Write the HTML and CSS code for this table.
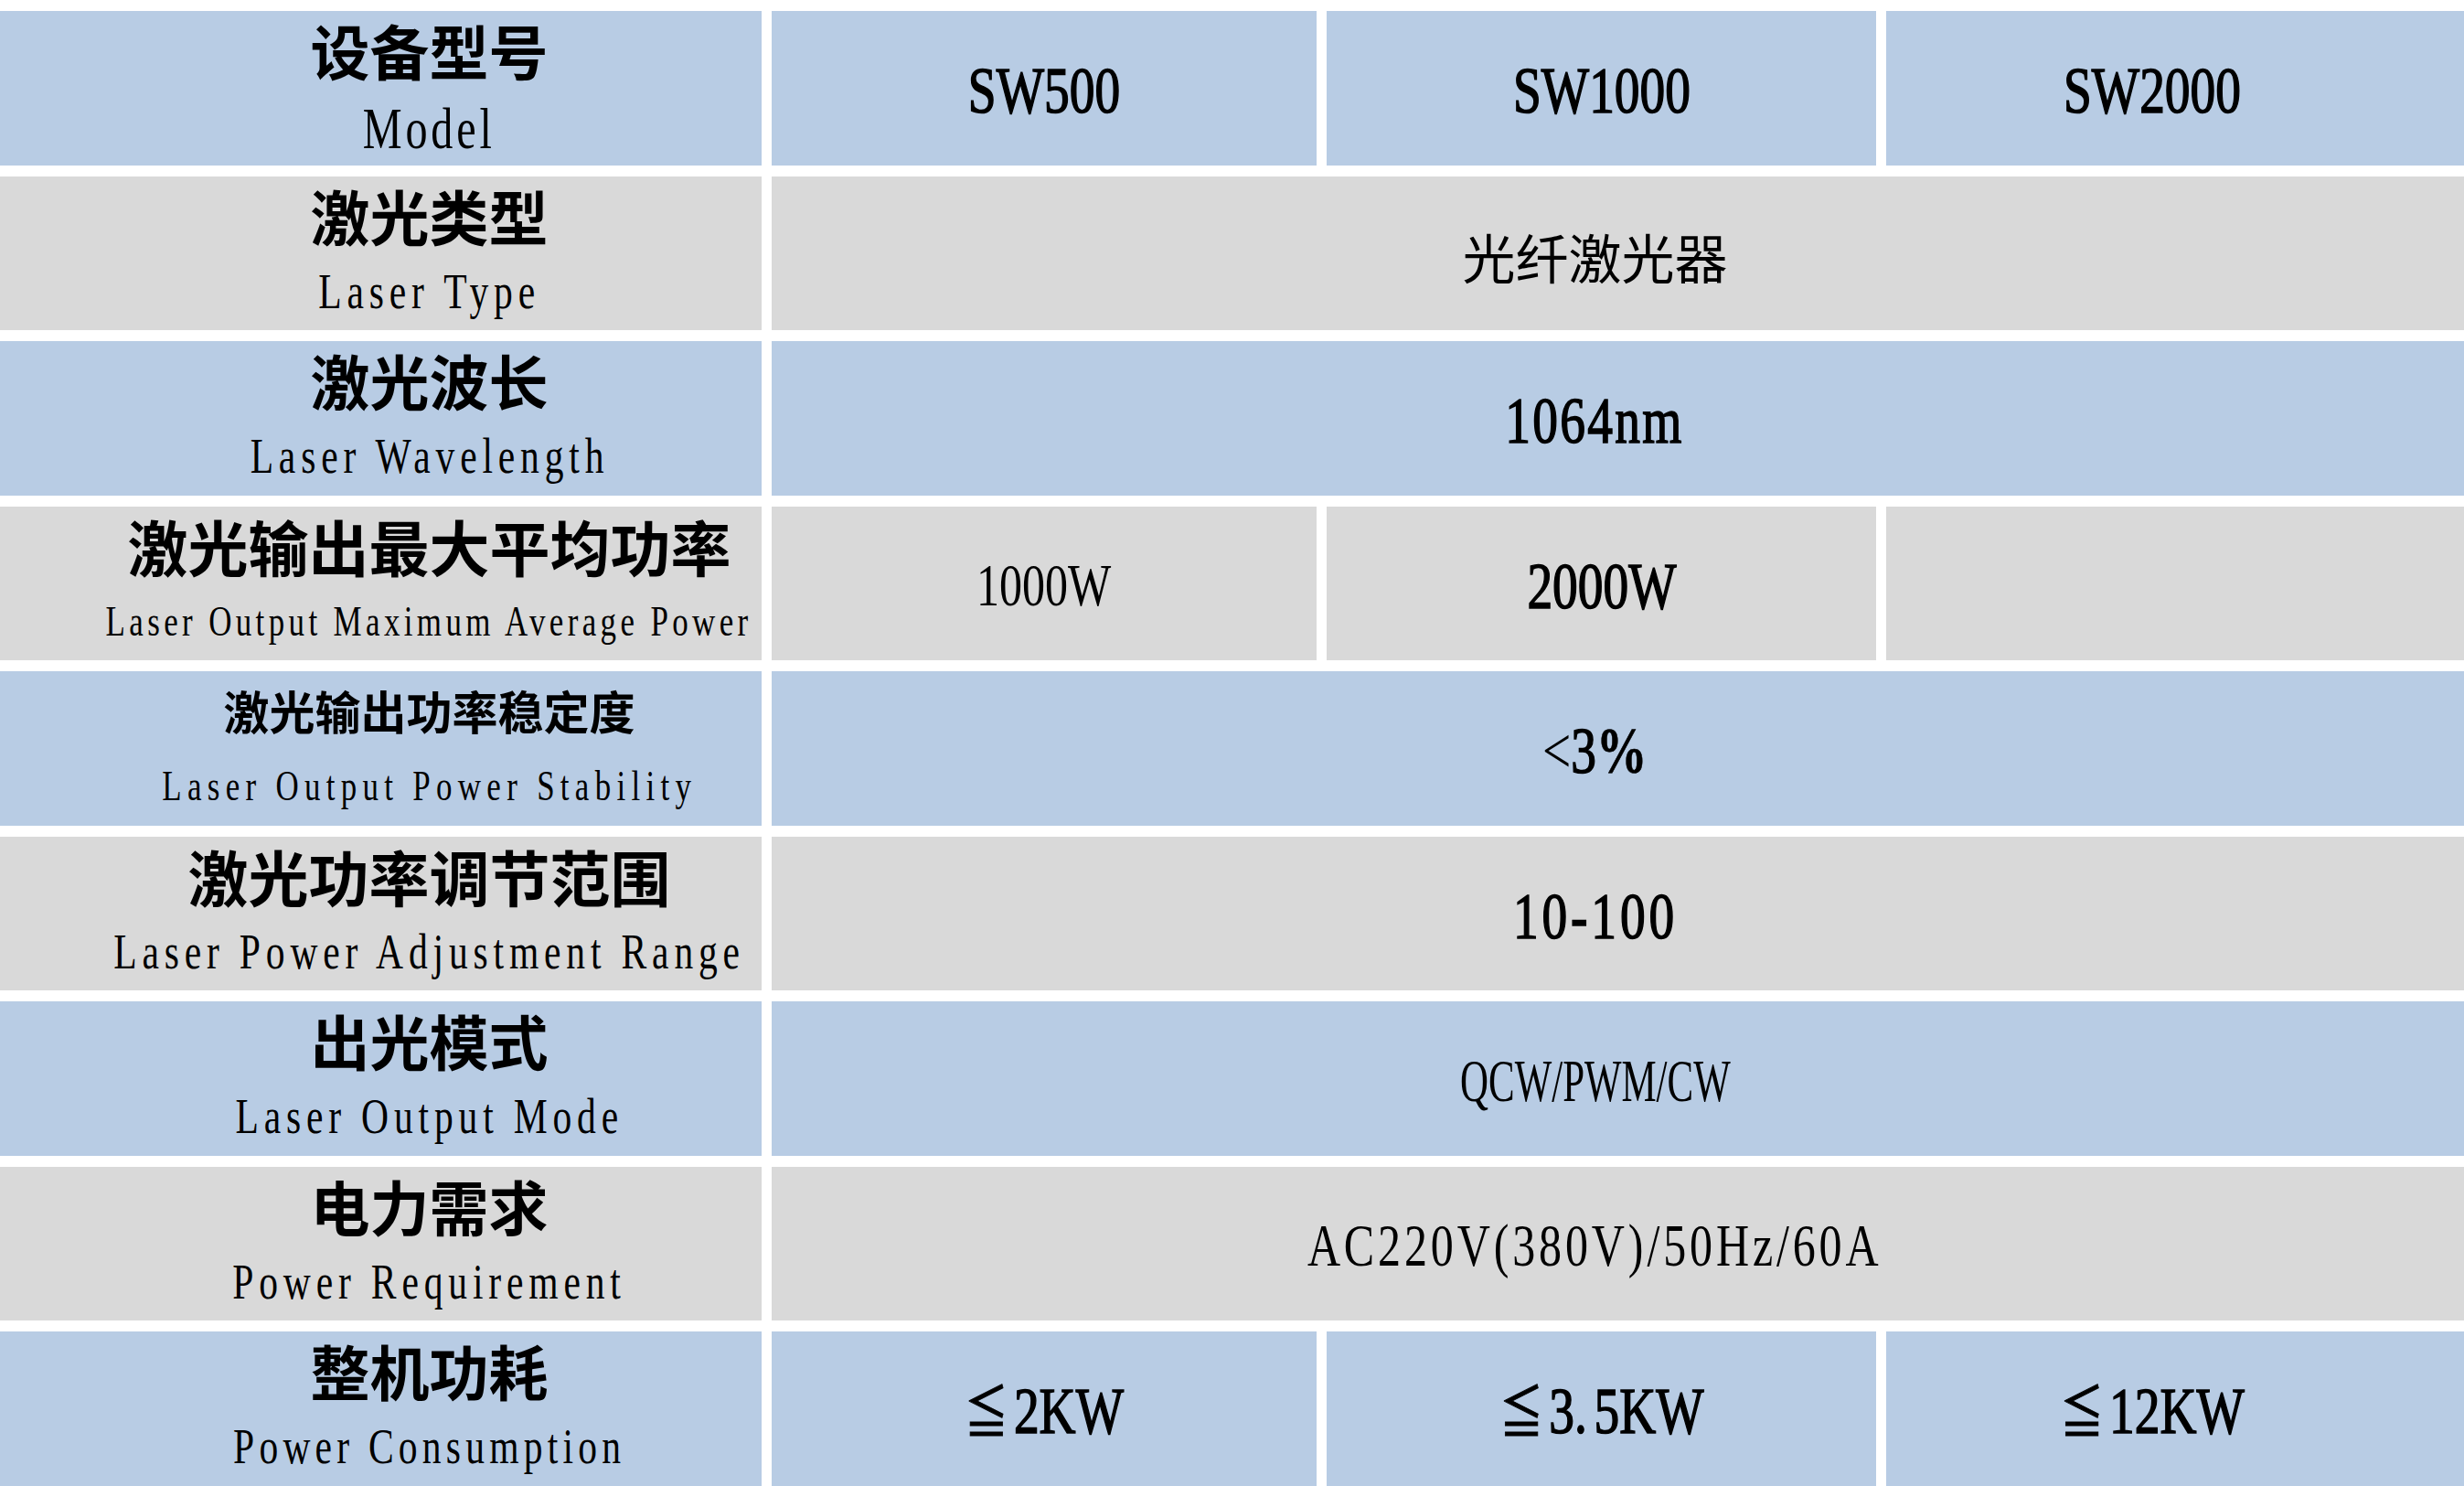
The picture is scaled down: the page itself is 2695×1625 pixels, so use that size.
FILE: index.html
```html
<!DOCTYPE html>
<html lang="zh-CN">
<head>
<meta charset="utf-8">
<title>设备参数</title>
<link rel="stylesheet" href="styles.css">
</head>
<body>
<main class="spec-table">
  <div class="cell label blue"><span class="zh">设备型号</span><span class="en en-model">Model</span></div>
  <div class="cell val blue"><span class="num b">SW500</span></div>
  <div class="cell val blue"><span class="num b">SW1000</span></div>
  <div class="cell val blue last"><span class="num b">SW2000</span></div>

  <div class="cell label gray"><span class="zh">激光类型</span><span class="en">Laser Type</span></div>
  <div class="cell val gray wide last"><span class="zh-val">光纤激光器</span></div>

  <div class="cell label blue"><span class="zh">激光波长</span><span class="en">Laser Wavelength</span></div>
  <div class="cell val blue wide last"><span class="num b ls-s">1064nm</span></div>

  <div class="cell label gray"><span class="zh zh-66">激光输出最大平均功率</span><span class="en en-sm en-tight">Laser Output Maximum Average Power</span></div>
  <div class="cell val gray"><span class="num">1000W</span></div>
  <div class="cell val gray"><span class="num b">2000W</span></div>
  <div class="cell val gray last"></div>

  <div class="cell label blue"><span class="zh zh-50">激光输出功率稳定度</span><span class="en en-sm en-loose">Laser Output Power Stability</span></div>
  <div class="cell val blue wide last"><span class="num b"><span class="thin">&lt;</span>3<span class="pct">%</span></span></div>

  <div class="cell label gray"><span class="zh zh-66">激光功率调节范围</span><span class="en">Laser Power Adjustment Range</span></div>
  <div class="cell val gray wide last"><span class="num b ls-l">10-100</span></div>

  <div class="cell label blue"><span class="zh">出光模式</span><span class="en">Laser Output Mode</span></div>
  <div class="cell val blue wide last"><span class="num narrow">QCW/PWM/CW</span></div>

  <div class="cell label gray"><span class="zh">电力需求</span><span class="en">Power Requirement</span></div>
  <div class="cell val gray wide last"><span class="num ls-m">AC220V(380V)/50Hz/60A</span></div>

  <div class="cell label blue"><span class="zh">整机功耗</span><span class="en en-tight">Power Consumption</span></div>
  <div class="cell val blue"><span class="num b"><span class="sym">≦</span>2KW</span></div>
  <div class="cell val blue"><span class="num b"><span class="sym">≦</span>3.<span class="gap"></span>5KW</span></div>
  <div class="cell val blue last"><span class="num b"><span class="sym">≦</span>12KW</span></div>
</main>
</body>
</html>
```

FILE: styles.css
```css
html, body {
  margin: 0;
  padding: 0;
  background: #ffffff;
}

body {
  width: 2695px;
  height: 1625px;
  overflow: hidden;
  color: #000000;
  font-family: "Liberation Serif", "Noto Sans CJK SC", serif;
}

.spec-table {
  display: grid;
  grid-template-columns: 833px 596px 601px 632px;
  grid-auto-rows: 168.5px;
  column-gap: 11px;
  row-gap: 12px;
  padding-top: 12px;
}

.cell {
  box-sizing: border-box;
  overflow: visible;
}

.blue {
  background: #b8cce4;
}

.gray {
  background: #d9d9d9;
}

/* label column */
.label {
  display: flex;
  flex-direction: column;
  align-items: center;
  justify-content: flex-start;
  padding-left: 106px;
}

.zh {
  font-family: "Noto Sans CJK SC", sans-serif;
  font-weight: 700;
  font-size: 65px;
  line-height: 84px;
  white-space: nowrap;
}

.zh-66 {
  font-size: 66px;
}

.zh-50 {
  font-size: 50px;
}

.en {
  font-family: "Liberation Serif", serif;
  font-weight: 400;
  font-size: 54px;
  line-height: 84px;
  letter-spacing: 0.14em;
  white-space: nowrap;
  transform: scaleX(0.77);
  transform-origin: center;
}

.en-model {
  font-size: 62.6px;
  letter-spacing: 0.08em;
  margin-top: 3px;
}

.en-sm {
  font-size: 45.4px;
}

.en-tight {
  letter-spacing: 0.125em;
}

.en-loose {
  letter-spacing: 0.18em;
}

/* value cells */
.val {
  display: flex;
  align-items: center;
  justify-content: center;
  padding-top: 6px;
}

.wide {
  grid-column: span 3;
}

.last {
  padding-right: 50px;
}

.num {
  font-family: "Liberation Serif", serif;
  font-weight: 400;
  font-size: 65px;
  line-height: 1;
  white-space: nowrap;
  transform: scaleX(0.77);
  transform-origin: center;
}

.num.b {
  font-size: 72px;
  -webkit-text-stroke: 1.6px #000000;
}

.num.narrow {
  transform: scaleX(0.66);
}

.thin {
  -webkit-text-stroke: 0;
}

.pct {
  font-weight: 700;
  -webkit-text-stroke: 0.6px #000000;
}

.sym {
  display: inline-block;
  font-family: "Noto Sans CJK SC", sans-serif;
  font-weight: 400;
  font-size: 62px;
  margin-right: 8px;
  -webkit-text-stroke: 1px #000000;
}

.gap {
  display: inline-block;
  width: 10px;
}

.ls-s {
  letter-spacing: 3px;
}

.ls-l {
  letter-spacing: 5px;
}

.ls-m {
  letter-spacing: 5px;
}

.zh-val {
  font-family: "Noto Sans CJK SC", sans-serif;
  font-weight: 400;
  font-size: 58px;
  line-height: 1;
  white-space: nowrap;
}
```
